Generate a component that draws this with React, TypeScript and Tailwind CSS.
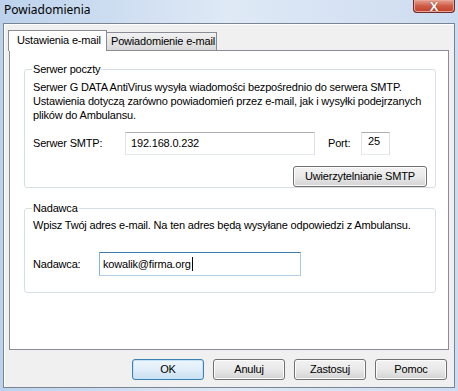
import React from 'react'

const uiFont = { fontFamily: '"Liberation Sans", Arial, sans-serif' }

function WinButton({
  label,
  primary,
  className,
}: {
  label: string
  primary?: boolean
  className?: string
}): JSX.Element {
  return (
    <button
      className={
        'flex h-[21px] items-center justify-center rounded-[3px] border text-[11px] font-normal text-black ' +
        (primary
          ? 'border-[#3c7fb1] bg-gradient-to-b from-[#eef6fc] via-[#e0eef9] to-[#c9dff1] shadow-[inset_0_0_0_1px_#c5e3f8] '
          : 'border-[#707070] bg-gradient-to-b from-[#f2f2f2] via-[#e9e9e9] to-[#d3d3d3] shadow-[inset_0_0_0_1px_#fcfcfc] ') +
        (className ?? '')
      }
    >
      {label}
    </button>
  )
}

function GroupBox({
  title,
  className,
  children,
}: {
  title: string
  className?: string
  children: React.ReactNode
}): JSX.Element {
  return (
    <fieldset
      className={
        'rounded-[3px] border border-[#d5dfe5] px-[8px] ' + (className ?? '')
      }
    >
      <legend className="-ml-[1px] px-[1px] text-[11px] leading-[13px]">
        {title}
      </legend>
      {children}
    </fieldset>
  )
}

export default function App(): JSX.Element {
  return (
    <div
      className="flex h-[391px] w-[458px] flex-col bg-gradient-to-r from-[#bcd2ec] via-[#dfe9f6] to-[#cddcf0] px-[3px] pb-[3px] tracking-[-0.18px]"
      style={uiFont}
    >
      {/* title bar */}
      <div className="flex h-[23px] shrink-0 items-start justify-between">
        <span
          className="pl-[1px] pt-[2px] text-[12px] leading-[16px] tracking-normal text-black"
          style={{ fontFamily: '"Noto Sans", "Open Sans", sans-serif' }}
        >
          Powiadomienia
        </span>
        <div className="flex h-[13px] w-[42px] items-end justify-center rounded-b-[4px] border border-t-0 border-[#6d2d2b] bg-gradient-to-b from-[#e6a193] via-[#cf5b44] to-[#c0412a] shadow-[inset_0_0_0_1px_#e9a596]">
          <span className="text-[13px] font-bold leading-[11px] text-white [text-shadow:0_0_1px_#5a1c12]">
            X
          </span>
        </div>
      </div>

      {/* client area */}
      <div className="flex flex-1 flex-col border border-[#7b8493] bg-[#f0f0f0] shadow-[inset_1px_1px_0_#ffffff]">
        {/* tabs */}
        <div className="ml-[4px] mt-[6px] flex items-end whitespace-nowrap">
          <div className="relative z-10 -mb-[1px] flex h-[21px] w-[99px] items-start border border-b-0 border-[#898c95] bg-white pl-[8px] pt-[3px] text-[11px] leading-[13px]">
            Ustawienia e-mail
          </div>
          <div className="flex h-[18px] w-[110px] items-start border border-b-0 border-l-0 border-[#898c95] bg-gradient-to-b from-[#f2f2f2] to-[#d9d9d9] pl-[4px] pt-[2px] text-[11px] leading-[13px]">
            Powiadomienie e-mail
          </div>
        </div>

        {/* tab panel */}
        <div className="mx-[5px] flex h-[300px] flex-col border border-[#898c95] bg-white pl-[14px] pr-[12px] pt-[12px]">
          <GroupBox title="Serwer poczty" className="h-[125px]">
            <div className="whitespace-nowrap pt-[4px] text-[11px] leading-[14px]">
              <p>
                Serwer G DATA AntiVirus wysyła wiadomości bezpośrednio do
                serwera SMTP.
              </p>
              <p>
                Ustawienia dotyczą zarówno powiadomień przez e-mail, jak i
                wysyłki podejrzanych
                <br />
                plików do Ambulansu.
              </p>
            </div>
            <div className="mt-[10px] flex items-center text-[11px]">
              <span className="w-[92px]">Serwer SMTP:</span>
              <div className="flex h-[23px] w-[190px] items-start border border-[#abadb3] border-b-[#e3e9ef] border-l-[#e2e3ea] border-r-[#dbdfe6] bg-white pl-[5px] pt-[3px] leading-[14px]">
                192.168.0.232
              </div>
              <span className="ml-[13px] w-[33px]">Port:</span>
              <div className="flex h-[23px] w-[29px] items-start border border-[#abadb3] border-b-[#e3e9ef] border-l-[#e2e3ea] border-r-[#dbdfe6] bg-white pl-[6px] pt-[1px] leading-[14px]">
                25
              </div>
            </div>
            <div className="mt-[11px] flex justify-end">
              <WinButton label="Uwierzytelnianie SMTP" className="w-[134px]" />
            </div>
          </GroupBox>

          <GroupBox title="Nadawca" className="mt-[14px] h-[91px]">
            <p className="whitespace-nowrap pt-[3px] text-[11px] leading-[14px]">
              Wpisz Twój adres e-mail. Na ten adres będą wysyłane odpowiedzi z
              Ambulansu.
            </p>
            <div className="mt-[20px] flex items-center text-[11px]">
              <span className="w-[66px]">Nadawca:</span>
              <div className="flex h-[24px] w-[202px] items-start border border-[#3d7bad] border-b-[#b5cfe7] border-l-[#7eb4ea] border-r-[#a9c8e3] bg-white pl-[3px] pt-[4px] leading-[14px]">
                kowalik@firma.org
                <span className="ml-[1px] h-[14px] w-[1px] bg-black" />
              </div>
            </div>
          </GroupBox>
        </div>

        {/* dialog buttons */}
        <div className="mr-[7px] mt-[9px] flex justify-end gap-[9px]">
          <WinButton label="OK" primary className="w-[72px]" />
          <WinButton label="Anuluj" className="w-[72px]" />
          <WinButton label="Zastosuj" className="w-[72px]" />
          <WinButton label="Pomoc" className="w-[72px]" />
        </div>
      </div>
    </div>
  )
}
